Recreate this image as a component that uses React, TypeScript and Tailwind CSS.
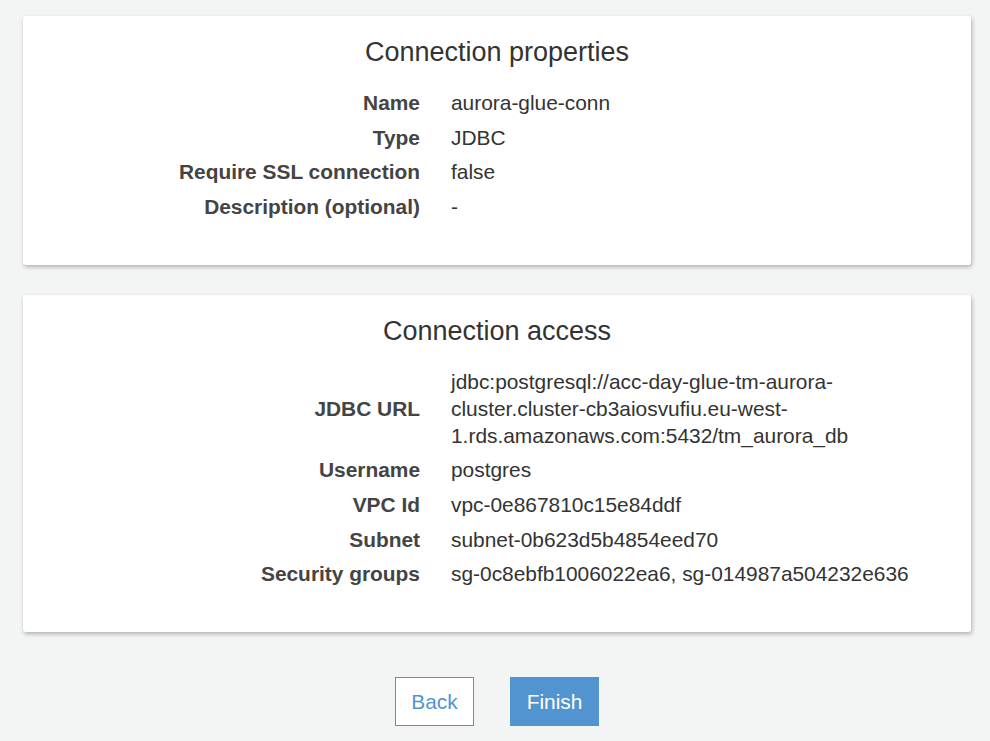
import React from 'react';

type Row = { label: string; value: React.ReactNode };

const properties: Row[] = [
  { label: 'Name', value: 'aurora-glue-conn' },
  { label: 'Type', value: 'JDBC' },
  { label: 'Require SSL connection', value: 'false' },
  { label: 'Description (optional)', value: '-' },
];

const access: Row[] = [
  {
    label: 'JDBC URL',
    value: 'jdbc:postgresql://acc-day-glue-tm-aurora-cluster.cluster-cb3aiosvufiu.eu-west-1.rds.amazonaws.com:5432/tm_aurora_db',
  },
  { label: 'Username', value: 'postgres' },
  { label: 'VPC Id', value: 'vpc-0e867810c15e84ddf' },
  { label: 'Subnet', value: 'subnet-0b623d5b4854eed70' },
  { label: 'Security groups', value: 'sg-0c8ebfb1006022ea6, sg-014987a504232e636' },
];

const Card = ({ title, rows }: { title: string; rows: Row[] }) => (
  <section className="w-[948px] ml-[23px] bg-white rounded-[3px] shadow-[1px_2px_4px_rgba(0,0,0,0.28)] pt-[17px] pb-[41px]">
    <h2 className="text-center text-[27px] leading-[38px] text-[#333] font-normal mb-[14px]">{title}</h2>
    <div className="grid grid-cols-[397px_490px] gap-x-[31px]">
      {rows.map((row) => (
        <React.Fragment key={row.label}>
          <div className="flex items-center justify-end text-right font-bold text-[#444] leading-[27px] py-[3.85px]">
            {row.label}
          </div>
          <div className="flex items-center text-[#333] leading-[27px] py-[3.85px]">
            <span>{row.value}</span>
          </div>
        </React.Fragment>
      ))}
    </div>
  </section>
);

export default function App() {
  return (
    <div
      className="min-h-[741px] w-[990px] bg-[#f3f4f4] pt-[16px] text-[20.9px]"
      style={{ fontFamily: '"Liberation Sans", Arial, sans-serif' }}
    >
      <Card title="Connection properties" rows={properties} />
      <div className="h-[30px]" />
      <Card title="Connection access" rows={access} />
      <div className="mt-[45px] ml-[23px] w-[948px] flex justify-center gap-[36px]">
        <button className="w-[79px] h-[49px] border border-[#5294cf] bg-white text-[#5294cf] text-[20.9px]">
          Back
        </button>
        <button className="w-[89px] h-[49px] bg-[#5294cf] text-white text-[20.9px]">Finish</button>
      </div>
    </div>
  );
}
